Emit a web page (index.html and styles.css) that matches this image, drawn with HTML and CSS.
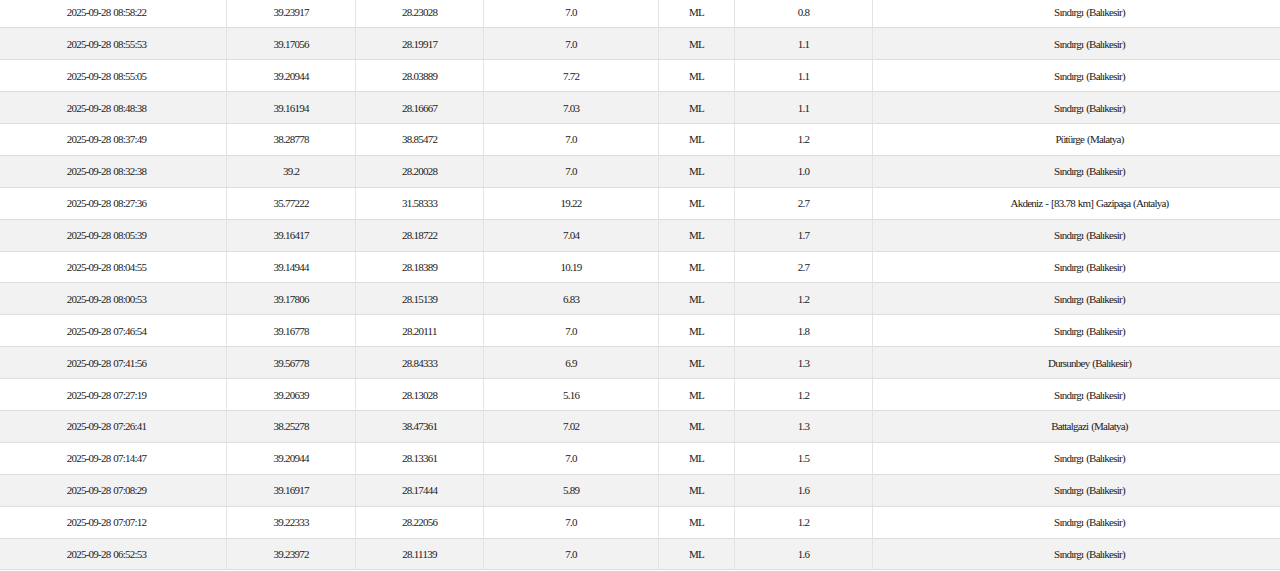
FILE: index.html
```html
<!DOCTYPE html>
<html lang="tr">
<head>
<meta charset="utf-8">
<title>Son Depremler</title>
<link rel="stylesheet" href="styles.css">
</head>
<body>
<div class="viewport">
<table class="quakes">
<colgroup>
<col class="c-date"><col class="c-lat"><col class="c-lon"><col class="c-depth"><col class="c-type"><col class="c-mag"><col class="c-place">
</colgroup>
<tbody>
<tr><td>2025-09-28 08:58:22</td><td>39.23917</td><td>28.23028</td><td>7.0</td><td>ML</td><td>0.8</td><td>Sındırgı (Balıkesir)</td></tr>
<tr><td>2025-09-28 08:55:53</td><td>39.17056</td><td>28.19917</td><td>7.0</td><td>ML</td><td>1.1</td><td>Sındırgı (Balıkesir)</td></tr>
<tr><td>2025-09-28 08:55:05</td><td>39.20944</td><td>28.03889</td><td>7.72</td><td>ML</td><td>1.1</td><td>Sındırgı (Balıkesir)</td></tr>
<tr><td>2025-09-28 08:48:38</td><td>39.16194</td><td>28.16667</td><td>7.03</td><td>ML</td><td>1.1</td><td>Sındırgı (Balıkesir)</td></tr>
<tr><td>2025-09-28 08:37:49</td><td>38.28778</td><td>38.85472</td><td>7.0</td><td>ML</td><td>1.2</td><td>Pütürge (Malatya)</td></tr>
<tr><td>2025-09-28 08:32:38</td><td>39.2</td><td>28.20028</td><td>7.0</td><td>ML</td><td>1.0</td><td>Sındırgı (Balıkesir)</td></tr>
<tr><td>2025-09-28 08:27:36</td><td>35.77222</td><td>31.58333</td><td>19.22</td><td>ML</td><td>2.7</td><td>Akdeniz - [83.78 km] Gazipaşa (Antalya)</td></tr>
<tr><td>2025-09-28 08:05:39</td><td>39.16417</td><td>28.18722</td><td>7.04</td><td>ML</td><td>1.7</td><td>Sındırgı (Balıkesir)</td></tr>
<tr><td>2025-09-28 08:04:55</td><td>39.14944</td><td>28.18389</td><td>10.19</td><td>ML</td><td>2.7</td><td>Sındırgı (Balıkesir)</td></tr>
<tr><td>2025-09-28 08:00:53</td><td>39.17806</td><td>28.15139</td><td>6.83</td><td>ML</td><td>1.2</td><td>Sındırgı (Balıkesir)</td></tr>
<tr><td>2025-09-28 07:46:54</td><td>39.16778</td><td>28.20111</td><td>7.0</td><td>ML</td><td>1.8</td><td>Sındırgı (Balıkesir)</td></tr>
<tr><td>2025-09-28 07:41:56</td><td>39.56778</td><td>28.84333</td><td>6.9</td><td>ML</td><td>1.3</td><td>Dursunbey (Balıkesir)</td></tr>
<tr><td>2025-09-28 07:27:19</td><td>39.20639</td><td>28.13028</td><td>5.16</td><td>ML</td><td>1.2</td><td>Sındırgı (Balıkesir)</td></tr>
<tr><td>2025-09-28 07:26:41</td><td>38.25278</td><td>38.47361</td><td>7.02</td><td>ML</td><td>1.3</td><td>Battalgazi (Malatya)</td></tr>
<tr><td>2025-09-28 07:14:47</td><td>39.20944</td><td>28.13361</td><td>7.0</td><td>ML</td><td>1.5</td><td>Sındırgı (Balıkesir)</td></tr>
<tr><td>2025-09-28 07:08:29</td><td>39.16917</td><td>28.17444</td><td>5.89</td><td>ML</td><td>1.6</td><td>Sındırgı (Balıkesir)</td></tr>
<tr><td>2025-09-28 07:07:12</td><td>39.22333</td><td>28.22056</td><td>7.0</td><td>ML</td><td>1.2</td><td>Sındırgı (Balıkesir)</td></tr>
<tr><td>2025-09-28 06:52:53</td><td>39.23972</td><td>28.11139</td><td>7.0</td><td>ML</td><td>1.6</td><td>Sındırgı (Balıkesir)</td></tr>
</tbody>
</table>
</div>
</body>
</html>
```
FILE: styles.css
```css
html, body {
  margin: 0;
  padding: 0;
  background: #ffffff;
}

.viewport {
  width: 1280px;
  height: 571px;
  overflow: hidden;
}

.quakes {
  border-collapse: separate;
  border-spacing: 0;
  table-layout: fixed;
  width: 1320px;
  margin: -3.6px 0 0 -13px;
  font-family: "Liberation Serif", "Times New Roman", serif;
  font-size: 11px;
  letter-spacing: -0.75px;
  word-spacing: 0.8px;
  color: #1a1a1a;
}

.c-date { width: 240px; }
.c-lat { width: 129px; }
.c-lon { width: 128px; }
.c-depth { width: 175px; }
.c-type { width: 76px; }
.c-mag { width: 138px; }
.c-place { width: 434px; }

.quakes td {
  box-sizing: border-box;
  height: 31.9px;
  padding: 0 4px;
  text-align: center;
  vertical-align: middle;
  border-right: 1px solid #e3e3e3;
  border-bottom: 1px solid #dddddd;
  white-space: nowrap;
}

.quakes tr:nth-child(even) td {
  background: #f2f2f2;
}
```
